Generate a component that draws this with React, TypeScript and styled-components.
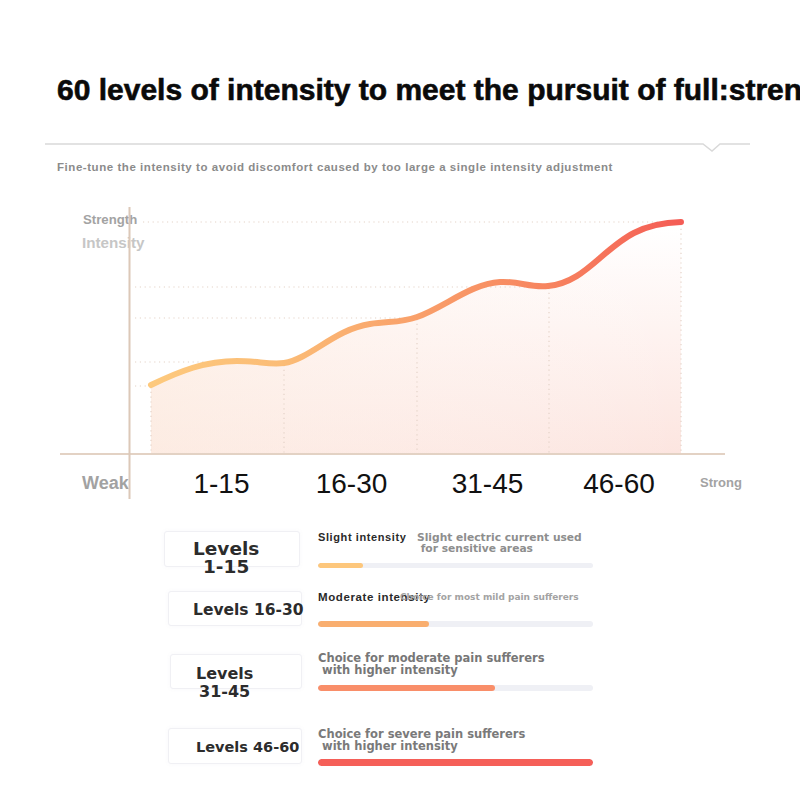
import React from 'react'
import styled, { createGlobalStyle } from 'styled-components'

const GlobalStyle = createGlobalStyle`
  html, body {
    margin: 0;
    padding: 0;
    background: #fff;
  }
  body {
    font-family: 'Liberation Sans', Arial, sans-serif;
    overflow: hidden;
  }
`

const Page = styled.div`
  width: 800px;
  height: 800px;
  overflow: hidden;
  background: #fff;
  display: flex;
  flex-direction: column;
`

const Title = styled.h1`
  margin: 75px 0 0 57px;
  font-size: 30px;
  line-height: 30px;
  font-weight: bold;
  color: #0a0a0a;
  white-space: nowrap;
  -webkit-text-stroke: 0.6px #0a0a0a;
`

const Divider = styled.svg`
  display: block;
  margin: 38px 0 0 45px;
  width: 705px;
  height: 10px;
`

const Subtitle = styled.p`
  margin: 8px 0 0 57px;
  font-size: 11.5px;
  line-height: 13px;
  letter-spacing: 0.55px;
  font-weight: bold;
  color: #8b8b8b;
  white-space: nowrap;
`

const ChartSvg = styled.svg`
  display: block;
  margin-top: 25px;
  width: 800px;
  height: 305px;
  font-family: 'Liberation Sans', Arial, sans-serif;
`

const Levels = styled.div`
  display: flex;
  flex-direction: column;
  margin-top: 27px;
`

const Row = styled.div<{ h: number }>`
  display: grid;
  grid-template-columns: 318px 280px;
  height: ${(p) => p.h}px;
`

const LabelBox = styled.div<{ x: number; w: number; h: number; pl: number; pt: number }>`
  margin-left: ${(p) => p.x}px;
  width: ${(p) => p.w}px;
  height: ${(p) => p.h}px;
  box-sizing: border-box;
  padding: ${(p) => p.pt}px 0 0 ${(p) => p.pl}px;
  border: 1px solid #f0f0f4;
  border-radius: 3px;
  box-shadow: 0 0 4px rgba(120, 120, 150, 0.05);
  background: #fff;
`

const LabelText = styled.div<{ size: number; lh: number }>`
  width: fit-content;
  text-align: center;
  font-family: 'DejaVu Sans', Verdana, sans-serif;
  font-weight: bold;
  font-size: ${(p) => p.size}px;
  line-height: ${(p) => p.lh}px;
  color: #2c2c2c;
  white-space: pre;
`

const Info = styled.div<{ mt: number }>`
  display: flex;
  flex-direction: column;
  margin-top: ${(p) => p.mt}px;
`

const InfoHead = styled.div`
  display: flex;
  align-items: flex-start;
`

const Tag = styled.span<{ w: number; size: number }>`
  flex: none;
  width: ${(p) => p.w}px;
  font-size: ${(p) => p.size}px;
  line-height: 12px;
  letter-spacing: 0.6px;
  font-weight: bold;
  color: #2a2a2a;
  white-space: nowrap;
`

const Note = styled.span<{ size: number; lh: number; color: string; mt: number }>`
  margin-top: ${(p) => p.mt}px;
  font-family: 'DejaVu Sans', Verdana, sans-serif;
  font-weight: bold;
  font-size: ${(p) => p.size}px;
  line-height: ${(p) => p.lh}px;
  color: ${(p) => p.color};
  white-space: pre;
`

const Track = styled.div<{ h: number; mt: number }>`
  margin-top: ${(p) => p.mt}px;
  width: 275px;
  height: ${(p) => p.h}px;
  border-radius: ${(p) => p.h / 2}px;
  background: #eff0f5;
  overflow: hidden;
`

const Fill = styled.div<{ color: string }>`
  height: 100%;
  border-radius: inherit;
  background: ${(p) => p.color};
`

type Level = {
  rowH: number
  box: { x: number; w: number; h: number; pl: number; pt: number }
  label: string
  labelSize: number
  labelLh: number
  infoMt: number
  tag?: { text: string; w: number; size: number }
  note: { text: string; size: number; lh: number; color: string; mt: number }
  bar: { h: number; mt: number; fill: number; color: string }
}

const levels: Level[] = [
  {
    rowH: 60,
    box: { x: 164, w: 136, h: 36, pl: 28, pt: 8 },
    label: 'Levels\n1-15',
    labelSize: 18.5,
    labelLh: 18.3,
    infoMt: 0,
    tag: { text: 'Slight intensity', w: 99, size: 11 },
    note: { text: 'Slight electric current used\n for sensitive areas', size: 10.7, lh: 10.6, color: '#8e8e8e', mt: 2 },
    bar: { h: 5, mt: 9, fill: 45, color: '#fdc77c' },
  },
  {
    rowH: 63,
    box: { x: 168, w: 134, h: 35, pl: 24, pt: 9 },
    label: 'Levels 16-30',
    labelSize: 15.5,
    labelLh: 18,
    infoMt: 0,
    tag: { text: 'Moderate intensity', w: 82, size: 11.5 },
    note: { text: 'Choice for most mild pain sufferers', size: 9, lh: 11, color: '#a3a3a3', mt: 1 },
    bar: { h: 6, mt: 18, fill: 111, color: '#f9ae6f' },
  },
  {
    rowH: 74,
    box: { x: 170, w: 132, h: 35, pl: 25, pt: 10 },
    label: 'Levels\n31-45',
    labelSize: 16,
    labelLh: 17.6,
    infoMt: -2,
    note: { text: 'Choice for moderate pain sufferers\n with higher intensity', size: 11.5, lh: 12.4, color: '#777', mt: 0 },
    bar: { h: 6, mt: 8, fill: 177, color: '#f98e69' },
  },
  {
    rowH: 40,
    box: { x: 168, w: 134, h: 36, pl: 27, pt: 10 },
    label: 'Levels 46-60',
    labelSize: 14.5,
    labelLh: 17,
    infoMt: 1,
    note: { text: 'Choice for severe pain sufferers\n with higher intensity', size: 11.5, lh: 11.7, color: '#7a7a7a', mt: 0 },
    bar: { h: 7, mt: 7, fill: 275, color: '#f55f58' },
  },
]

const curve =
  'M151,386 C180,372 205,362 237,362 C258,362 270,366 284,364 C310,360 335,330 370,325 ' +
  'C390,322 400,324 417,318 C445,308 470,285 500,283 C520,282 530,289 548,287 ' +
  'C570,285 585,272 600,259 C622,240 640,224 681,223'

const dot = { stroke: '#e4d3c8', strokeWidth: 1.2, strokeDasharray: '1.2 3.6' }

const ranges = [
  { x: 221.5, text: '1-15' },
  { x: 351.5, text: '16-30' },
  { x: 487.5, text: '31-45' },
  { x: 619, text: '46-60' },
]

function Chart() {
  return (
    <ChartSvg viewBox="0 200 800 305">
      <defs>
        <linearGradient id="curveGrad" x1="151" y1="0" x2="681" y2="0" gradientUnits="userSpaceOnUse">
          <stop offset="0" stopColor="#fdc97d" />
          <stop offset="0.25" stopColor="#fbbc76" />
          <stop offset="0.5" stopColor="#f9a06a" />
          <stop offset="0.75" stopColor="#f7845f" />
          <stop offset="1" stopColor="#f45c55" />
        </linearGradient>
        <linearGradient id="areaGrad" x1="0" y1="230" x2="0" y2="455" gradientUnits="userSpaceOnUse">
          <stop offset="0" stopColor="#fde2dc" stopOpacity="0" />
          <stop offset="1" stopColor="#fce2dc" stopOpacity="0.9" />
        </linearGradient>
        <linearGradient id="areaTint" x1="151" y1="0" x2="681" y2="0" gradientUnits="userSpaceOnUse">
          <stop offset="0" stopColor="#fdf0e4" stopOpacity="0.6" />
          <stop offset="1" stopColor="#ffffff" stopOpacity="0" />
        </linearGradient>
      </defs>

      <path d={`${curve} L681,455 L151,455 Z`} fill="url(#areaGrad)" />
      <path d={`${curve} L681,455 L151,455 Z`} fill="url(#areaTint)" />

      <line x1="143" y1="223" x2="681" y2="223" {...dot} />
      <line x1="135" y1="288" x2="549" y2="288" {...dot} />
      <line x1="135" y1="319" x2="417" y2="319" {...dot} />
      <line x1="135" y1="363" x2="284" y2="363" {...dot} />
      <line x1="135" y1="387" x2="151" y2="387" {...dot} />
      <line x1="151" y1="388" x2="151" y2="454" {...dot} />
      <line x1="284" y1="366" x2="284" y2="454" {...dot} />
      <line x1="417" y1="320" x2="417" y2="454" {...dot} />
      <line x1="549" y1="289" x2="549" y2="454" {...dot} />
      <line x1="681" y1="225" x2="681" y2="454" {...dot} />

      <text x="83" y="225" fontSize="13.2" fontWeight="bold" fill="#a3a3a3">Strength</text>
      <text x="82" y="249" fontSize="15.2" fontWeight="bold" fill="#c6c6c6">Intensity</text>
      <text x="82" y="490" fontSize="18" fontWeight="bold" fill="#a2a2a2">Weak</text>
      <text x="700" y="487.5" fontSize="13" fontWeight="bold" fill="#a3a3a3">Strong</text>
      {ranges.map((r) => (
        <text key={r.text} x={r.x} y="494" fontSize="28" fill="#111" textAnchor="middle">
          {r.text}
        </text>
      ))}

      <line x1="60" y1="455" x2="725" y2="455" stroke="#e3d2c4" strokeWidth="2" />
      <line x1="129.5" y1="208" x2="129.5" y2="500" stroke="#dcc8b8" strokeWidth="2" />

      <path d={curve} fill="none" stroke="url(#curveGrad)" strokeWidth="6" strokeLinecap="round" />
    </ChartSvg>
  )
}

export default function App() {
  return (
    <Page>
      <GlobalStyle />
      <Title>60 levels of intensity to meet the pursuit of full:strength</Title>
      <Divider viewBox="0 0 705 10">
        <polyline points="0,1 658,1 667,8 675,1 705,1" fill="none" stroke="#d9d9d9" strokeWidth="1.5" />
      </Divider>
      <Subtitle>Fine-tune the intensity to avoid discomfort caused by too large a single intensity adjustment</Subtitle>
      <Chart />
      <Levels>
        {levels.map((l) => (
          <Row key={l.label} h={l.rowH}>
            <div>
              <LabelBox {...l.box}>
                <LabelText size={l.labelSize} lh={l.labelLh}>{l.label}</LabelText>
              </LabelBox>
            </div>
            <Info mt={l.infoMt}>
              <InfoHead>
                {l.tag && (
                  <Tag w={l.tag.w} size={l.tag.size}>
                    {l.tag.text}
                  </Tag>
                )}
                <Note size={l.note.size} lh={l.note.lh} color={l.note.color} mt={l.note.mt}>
                  {l.note.text}
                </Note>
              </InfoHead>
              <Track h={l.bar.h} mt={l.bar.mt}>
                <Fill color={l.bar.color} style={{ width: l.bar.fill }} />
              </Track>
            </Info>
          </Row>
        ))}
      </Levels>
    </Page>
  )
}
